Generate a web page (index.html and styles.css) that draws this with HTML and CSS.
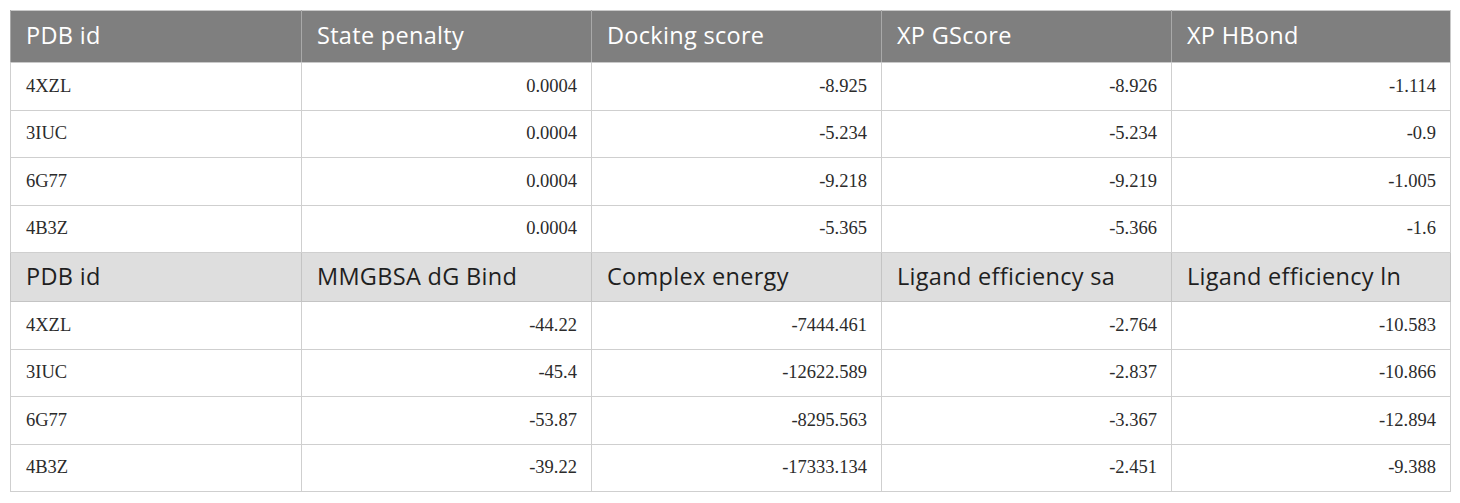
FILE: index.html
```html
<!DOCTYPE html>
<html>
<head>
<meta charset="utf-8">
<link rel="stylesheet" href="styles.css">
</head>
<body>
<table class="data">
  <colgroup>
    <col class="c1"><col class="c2"><col class="c3"><col class="c4"><col class="c5">
  </colgroup>
  <thead>
    <tr class="head-dark">
      <th>PDB id</th><th>State penalty</th><th>Docking score</th><th>XP GScore</th><th>XP HBond</th>
    </tr>
  </thead>
  <tbody>
    <tr><td class="id">4XZL</td><td>0.0004</td><td>-8.925</td><td>-8.926</td><td>-1.114</td></tr>
    <tr><td class="id">3IUC</td><td>0.0004</td><td>-5.234</td><td>-5.234</td><td>-0.9</td></tr>
    <tr><td class="id">6G77</td><td>0.0004</td><td>-9.218</td><td>-9.219</td><td>-1.005</td></tr>
    <tr><td class="id">4B3Z</td><td>0.0004</td><td>-5.365</td><td>-5.366</td><td>-1.6</td></tr>
    <tr class="head-light">
      <th>PDB id</th><th>MMGBSA dG Bind</th><th>Complex energy</th><th>Ligand efficiency sa</th><th>Ligand efficiency ln</th>
    </tr>
    <tr><td class="id">4XZL</td><td>-44.22</td><td>-7444.461</td><td>-2.764</td><td>-10.583</td></tr>
    <tr><td class="id">3IUC</td><td>-45.4</td><td>-12622.589</td><td>-2.837</td><td>-10.866</td></tr>
    <tr><td class="id">6G77</td><td>-53.87</td><td>-8295.563</td><td>-3.367</td><td>-12.894</td></tr>
    <tr><td class="id">4B3Z</td><td>-39.22</td><td>-17333.134</td><td>-2.451</td><td>-9.388</td></tr>
  </tbody>
</table>
</body>
</html>
```

FILE: styles.css
```css
html, body {
  margin: 0;
  padding: 0;
  background: #ffffff;
}
body {
  padding: 10px;
}
.data {
  border-collapse: collapse;
  table-layout: fixed;
  width: 1440px;
  border: 1px solid #c9c9c9;
}
.c1 { width: 291px; }
.c2 { width: 290px; }
.c3 { width: 290px; }
.c4 { width: 290px; }
.c5 { width: 279px; }

.data th {
  font-family: "Open Sans", "DejaVu Sans", sans-serif;
  font-weight: 400;
  font-size: 23.5px;
  letter-spacing: 0.3px;
  text-align: left;
  padding: 0 15px;
  white-space: nowrap;
}
.head-dark th {
  background: #7f7f7f;
  color: #ffffff;
  height: 48px;
  padding-bottom: 3px;
  border-left: 1px solid #a9a9a9;
  border-bottom: 1px solid #c9c9c9;
}
.head-light th {
  background: #dedede;
  color: #1f1f1f;
  height: 46px;
  padding-bottom: 2px;
  border: 1px solid #c4c4c4;
}
.data td {
  font-family: "Liberation Serif", "Times New Roman", serif;
  font-size: 18.5px;
  color: #2b2b2b;
  text-align: right;
  padding: 0 14px 0 15px;
  height: 46.5px;
  border: 1px solid #cfcfcf;
}
.data td.id {
  text-align: left;
}
```
